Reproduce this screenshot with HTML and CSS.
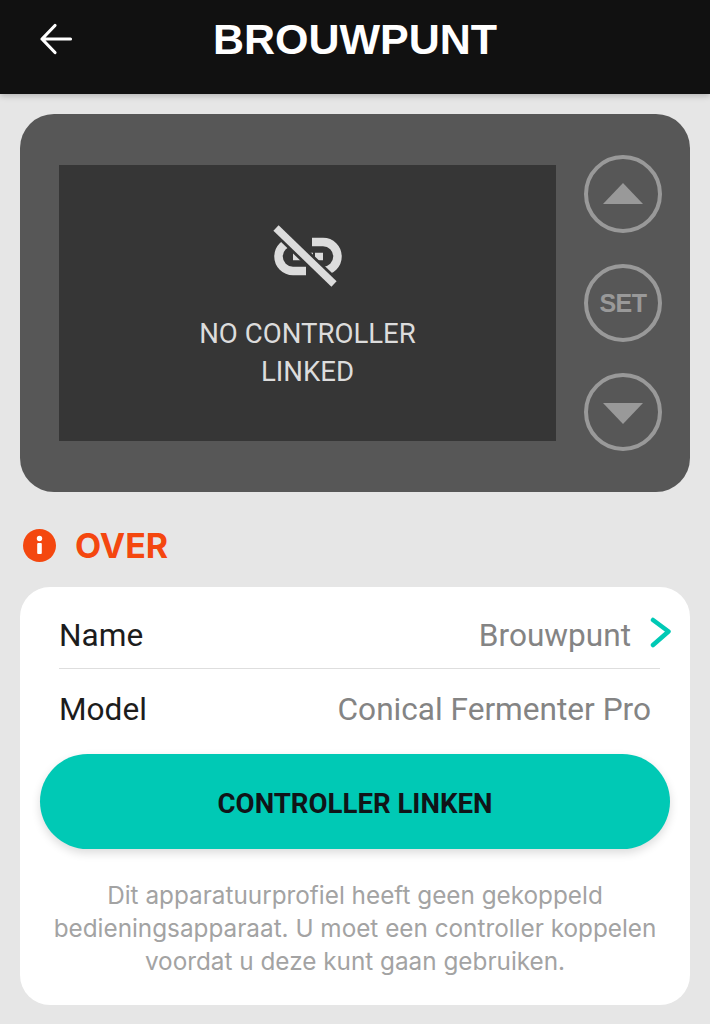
FILE: index.html
```html
<!DOCTYPE html>
<html lang="nl">
<head>
<meta charset="utf-8">
<title>Brouwpunt</title>
<link rel="stylesheet" href="styles.css">
</head>
<body>
<header class="topbar">
  <svg class="back" width="34" height="32" viewBox="0 0 34 32" aria-hidden="true"><path d="M31.500 16H3M16 2.500 3 16l13 13.500" fill="none" stroke="#fff" stroke-width="3.200" stroke-linecap="round" stroke-linejoin="round"/></svg>
  <h1 class="title">BROUWPUNT</h1>
</header>
<main class="content">
  <section class="device">
    <div class="screen">
      <svg class="unlink" width="78" height="70" viewBox="0 0 78 70" aria-hidden="true">
        <path d="M26 20H24A14.500 14.500 0 0 0 24 49H37M43 20H54A14.500 14.500 0 0 1 54 49H50" fill="none" stroke="#dcdcdc" stroke-width="8.500"/>
        <path d="M24 34.500H44M46 34.500H54" fill="none" stroke="#dcdcdc" stroke-width="7.500"/>
        <path d="M7 6 65 62" fill="none" stroke="#363636" stroke-width="13"/>
        <path d="M7 6 65 62" fill="none" stroke="#dcdcdc" stroke-width="7.500"/>
      </svg>
      <p class="screen-text">NO CONTROLLER<br>LINKED</p>
    </div>
    <div class="controls">
      <div class="round"><span class="tri tri-up"></span></div>
      <div class="round"><span class="set">SET</span></div>
      <div class="round"><span class="tri tri-down"></span></div>
    </div>
  </section>
  <div class="section-head">
    <svg width="33" height="33" viewBox="0 0 33 33" aria-hidden="true"><circle cx="16.500" cy="16.500" r="16.500" fill="#f4470f"/><rect x="14.200" y="14" width="4.600" height="11" rx="1" fill="#fff"/><circle cx="16.500" cy="9.500" r="2.700" fill="#fff"/></svg>
    <h2 class="section-title">OVER</h2>
  </div>
  <section class="card">
    <div class="row row-name">
      <span class="label">Name</span>
      <span class="value">Brouwpunt</span>
      <svg class="chev" width="24" height="32" viewBox="0 0 24 32" aria-hidden="true"><path d="M4 3 19.500 14.500 4 28" fill="none" stroke="#00c9b5" stroke-width="4.500" stroke-linecap="round" stroke-linejoin="round"/></svg>
    </div>
    <div class="row row-model">
      <span class="label">Model</span>
      <span class="value">Conical Fermenter Pro</span>
    </div>
    <button class="cta" type="button">CONTROLLER LINKEN</button>
    <p class="note">Dit apparatuurprofiel heeft geen gekoppeld bedieningsapparaat. U moet een controller koppelen voordat u deze kunt gaan gebruiken.</p>
  </section>
</main>
</body>
</html>
```
FILE: styles.css
```css
* { box-sizing: border-box; }
html, body { margin: 0; padding: 0; }
body {
  width: 710px;
  height: 1024px;
  overflow: hidden;
  background: #e6e6e6;
  font-family: Roboto, "Liberation Sans", sans-serif;
}
.topbar {
  position: relative;
  height: 94px;
  background: #111111;
  display: flex;
  justify-content: center;
  padding-top: 14px;
  box-shadow: 0 2px 6px rgba(0,0,0,.22);
}
.back { position: absolute; left: 39px; top: 23px; }
.title {
  margin: 0;
  color: #fff;
  font: 700 43px/50px "Liberation Sans", sans-serif;
}
.content { padding: 20px 20px 0; }
.device {
  height: 378px;
  background: #575757;
  border-radius: 34px;
  padding: 51px 28px 51px 39px;
  display: flex;
  justify-content: space-between;
}
.screen {
  width: 497px;
  height: 276px;
  background: #363636;
  display: flex;
  flex-direction: column;
  align-items: center;
  padding-top: 57px;
}
.unlink { display: block; }
.screen-text {
  margin: 23px 0 0;
  color: #dcdcdc;
  font: 450 27.600px/37.500px Roboto, sans-serif;
  text-align: center;
}
.controls {
  display: flex;
  flex-direction: column;
  gap: 31px;
  margin-top: -10px;
  height: 296px;
  flex: none;
}
.round {
  flex: none;
  width: 78px;
  height: 78px;
  border: 4px solid #999;
  border-radius: 50%;
  display: flex;
  align-items: center;
  justify-content: center;
}
.tri { width: 0; height: 0; border-left: 20.500px solid transparent; border-right: 20.500px solid transparent; }
.tri-up { border-bottom: 21px solid #999; margin-top: -2px; }
.tri-down { border-top: 21px solid #999; margin-top: 2px; }
.set { color: #999; font: 700 25px/1 "Liberation Sans", sans-serif; letter-spacing: -0.5px; }
.section-head {
  display: flex;
  align-items: center;
  gap: 19px;
  margin: 37px 0 0 3px;
  height: 33px;
}
.section-title {
  margin: 0;
  color: #f4470f;
  font: 700 34px/33px Inter, sans-serif;
}
.card {
  margin-top: 25px;
  height: 418px;
  background: #fff;
  border-radius: 30px;
  padding: 0 20px;
}
.row {
  display: flex;
  align-items: center;
  font: 400 31.600px/36px Roboto, sans-serif;
}
.row-name {
  height: 82px;
  margin: 0 10px 0 19px;
  border-bottom: 1px solid #dedede;
  padding-top: 16px;
}
.row-model { height: 80px; margin-left: 19px; padding: 2px 19px 0 0; }
.label { color: #1c1c1c; }
.value { color: #848484; margin-left: auto; }
.chev { margin: -5px -13px 0 18px; }
.cta {
  display: block;
  width: 630px;
  height: 95px;
  margin: 5px 0 0;
  padding: 4px 0 0;
  border: 0;
  border-radius: 48px;
  background: #00c9b5;
  color: #101418;
  font: 700 27.600px/1 Roboto, sans-serif;
  box-shadow: 0 4px 10px rgba(0,0,0,.14);
}
.note {
  margin: 30px 0 0;
  color: #a3a3a3;
  font: 400 24.300px/33px Inter, sans-serif;
  text-align: center;
}
```
